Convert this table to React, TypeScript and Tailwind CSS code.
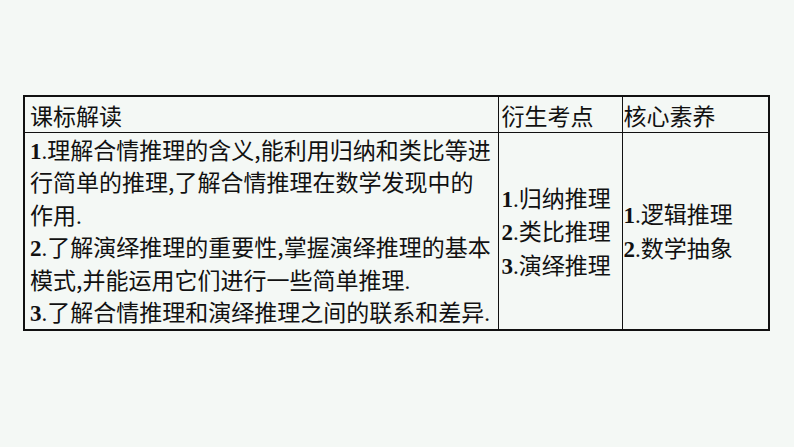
import React from "react";

const cjk = { fontFamily: '"Noto Sans CJK SC", "Noto Sans", sans-serif' };
const serif = { fontFamily: '"Liberation Serif", serif' };

function Num({ n }: { n: string }) {
  return (
    <span className="font-bold leading-none" style={serif}>
      {n}
    </span>
  );
}

function Dot() {
  return <span className="leading-none" style={serif}>.</span>;
}

export default function App() {
  const standard = [
    <><Num n="1" /><Dot />理解合情推理的含义,能利用归纳和类比等进</>,
    <>行简单的推理,了解合情推理在数学发现中的</>,
    <>作用<Dot /></>,
    <><Num n="2" /><Dot />了解演绎推理的重要性,掌握演绎推理的基本</>,
    <>模式,并能运用它们进行一些简单推理<Dot /></>,
    <><Num n="3" /><Dot />了解合情推理和演绎推理之间的联系和差异<Dot /></>,
  ];
  const points = ["归纳推理", "类比推理", "演绎推理"];
  const literacy = ["逻辑推理", "数学抽象"];

  return (
    <div className="w-[794px] h-[447px] bg-[#f4f8f5] pt-[95px] pl-[23px] text-[#111]" style={cjk}>
      <table className="border-collapse border-2 border-[#111] text-[23px] leading-[32.5px]">
        <thead>
          <tr className="h-[33px]">
            <th className="w-[474px] border border-[#111] px-[5px] text-left font-normal pt-[2px]">课标解读</th>
            <th className="w-[124px] border border-[#111] px-[3px] text-left font-normal pt-[2px]">衍生考点</th>
            <th className="w-[147px] border border-[#111] px-[1px] text-left font-normal pt-[2px]">核心素养</th>
          </tr>
        </thead>
        <tbody>
          <tr className="h-[198px]">
            <td className="border border-[#111] px-[5px] pt-0 align-top whitespace-nowrap">
              {standard.map((l, i) => (
                <div key={i} className="h-[32.5px]">{l}</div>
              ))}
            </td>
            <td className="border border-[#111] px-[3px] align-middle whitespace-nowrap">
              {points.map((p, i) => (
                <div key={i} className="h-[33.5px]">
                  <Num n={String(i + 1)} />
                  <Dot />
                  {p}
                </div>
              ))}
            </td>
            <td className="border border-[#111] px-[1px] align-middle whitespace-nowrap">
              {literacy.map((p, i) => (
                <div key={i} className="h-[33.5px]">
                  <Num n={String(i + 1)} />
                  <Dot />
                  {p}
                </div>
              ))}
            </td>
          </tr>
        </tbody>
      </table>
    </div>
  );
}
